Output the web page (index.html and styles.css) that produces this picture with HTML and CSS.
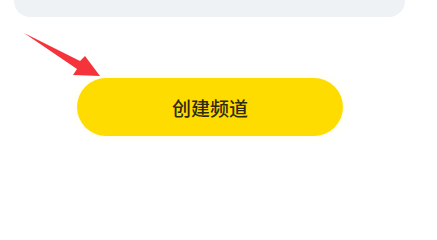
FILE: index.html
```html
<!DOCTYPE html>
<html lang="zh">
<head>
<meta charset="utf-8">
<link rel="stylesheet" href="styles.css">
</head>
<body>
<div class="page">
  <div class="card"></div>
  <div class="action">
    <button class="create-btn">创建频道</button>
  </div>
  <svg class="arrow" width="110" height="85" viewBox="0 0 110 85">
    <polygon points="24,33 80,61 85,56 100,76 73,75 77,69" fill="#f5333a"/>
  </svg>
</div>
</body>
</html>
```
FILE: styles.css
```css
html, body {
  margin: 0;
  padding: 0;
  background: #ffffff;
}
.page {
  position: relative;
  width: 437px;
  height: 217px;
  overflow: hidden;
  font-family: "Noto Sans CJK SC", "Noto Sans", sans-serif;
}
.card {
  margin-left: 14px;
  width: 391px;
  height: 17px;
  background: #eef2f5;
  border-radius: 0 0 16px 16px;
}
.action {
  padding: 61px 0 0 77px;
}
.create-btn {
  display: flex;
  align-items: center;
  justify-content: center;
  width: 266px;
  height: 58px;
  border: none;
  border-radius: 29px;
  background: #ffdc00;
  color: #2f2a10;
  font-family: "Noto Sans CJK SC", sans-serif;
  font-size: 19px;
  font-weight: 500;
  box-shadow: 0 0 10px rgba(255, 220, 0, 0.12);
  padding: 0;
}
.arrow {
  position: absolute;
  left: 0;
  top: 0;
}
```
